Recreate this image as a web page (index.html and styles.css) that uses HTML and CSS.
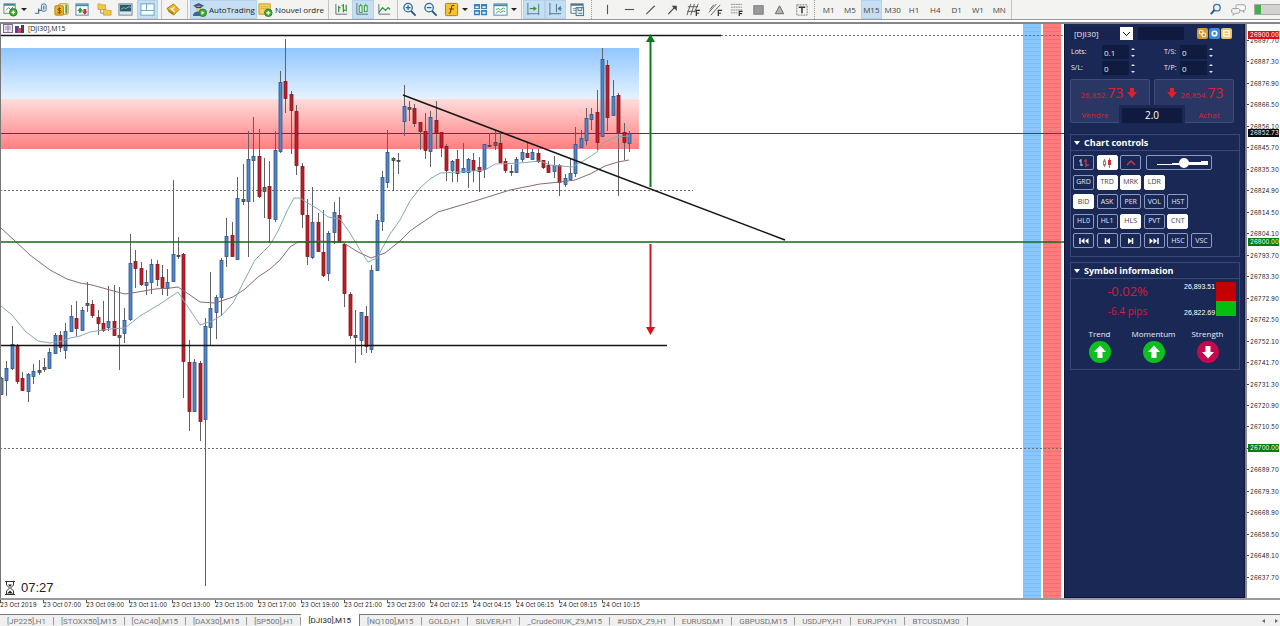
FILE: index.html
```html
<!DOCTYPE html>
<html lang="fr">
<head>
<meta charset="utf-8">
<title>[DJI30],M15</title>
<link rel="stylesheet" href="styles.css">
</head>
<body>
<header class="toolbar">
  <div class="group group-file">
    <button class="tool tool-menu" aria-label="New chart"><svg class="icon" viewBox="0 0 16 16"><rect x="1" y="2" width="12" height="10" fill="#fff" stroke="#5a8a6a"/><path d="M1 3h12" stroke="#4d80a0" stroke-width="2"/><path d="M3 9l3-3 2 2 3-3" fill="none" stroke="#3a9a3a"/><circle cx="11" cy="11" r="4" fill="#3fae2f" stroke="#287a20"/><path d="M11 9v4M9 11h4" stroke="#fff" stroke-width="1.4"/></svg><span class="caret"></span></button>
    <button class="tool" aria-label="Profiles"><svg class="icon" viewBox="0 0 16 16"><path d="M2 12h4v-3h5M6 12v-5" fill="none" stroke="#4a6f95" stroke-width="1.3"/><rect x="9" y="2" width="5" height="8" rx="2" fill="#dcecf8" stroke="#3f6d98"/><path d="M11.500 4v4" stroke="#2a5a88"/></svg></button>
    <button class="tool" aria-label="Market watch"><svg class="icon" viewBox="0 0 16 16"><rect x="5" y="2" width="10" height="11" rx="1" fill="#fff3c0" stroke="#b98a20"/><path d="M12 3h2v9h-2z" fill="#58a060"/><rect x="1" y="4" width="9" height="10" rx="1" fill="#f5b820" stroke="#b47a10"/><path d="M7.500 7H5a1 1 0 0 0 0 2h1.500a1 1 0 0 1 0 2.500H3.500M5.600 5.500v7.500" fill="none" stroke="#7a4a00"/></svg></button>
    <button class="tool" aria-label="Data window"><svg class="icon" viewBox="0 0 16 16"><rect x="1" y="2" width="13" height="12" fill="#fff" stroke="#4d86a8"/><path d="M1 3.500h13" stroke="#4d86a8" stroke-width="2"/><path d="M2.500 9.500l3-4 3 4H7v2H4v-2z" fill="#2c9a34"/><path d="M7.500 10l3 3.500 3-3.500H12V7.500H9V10z" fill="#cc3030"/></svg></button>
    <button class="tool" aria-label="Navigator"><svg class="icon" viewBox="0 0 16 16"><path d="M1 2h3l1 1h4v5H1z" fill="#f6c744" stroke="#c49320" stroke-width=".7"/><path d="M4 8v4h4" fill="none" stroke="#888"/><path d="M7 8h3l1 1h4v5H7z" fill="#f6c744" stroke="#c49320" stroke-width=".7"/></svg></button>
    <button class="tool" aria-label="Terminal"><svg class="icon" viewBox="0 0 16 16"><rect x="1" y="2" width="14" height="12" fill="#dce8ee" stroke="#6f8794"/><rect x="2" y="3" width="12" height="7" fill="#2c5876"/><path d="M3 8l3-2 2 1 4-2 2 1" fill="none" stroke="#7ccf6a"/></svg></button>
    <button class="tool is-on" aria-label="Tester"><svg class="icon" viewBox="0 0 16 16"><rect x="1" y="2" width="14" height="12" fill="#fff" stroke="#5fa0cc"/><path d="M1 9h14M7 2v7" stroke="#5fa0cc"/></svg></button>
  </div>
  <div class="group group-coin">
    <button class="tool" aria-label="MetaEditor"><svg class="icon" viewBox="0 0 16 16"><path d="M1 7l7-5 6 6-6 6z" fill="#efb52a" stroke="#a8761a"/><path d="M1 7l2 4 5 3v-3z" fill="#b88020"/><path d="M5 6.500l4 4M9 5l-3 4" stroke="#fff" stroke-width="1.200"/></svg></button>
  </div>
  <div class="group group-trade">
    <button class="tool tool-text is-on"><svg class="icon" viewBox="0 0 16 16"><path d="M1 4l6-3 6 3-6 3z" fill="#3b5c86"/><circle cx="7" cy="7" r="3" fill="#e6c39a"/><path d="M4 5h6v1.500H4z" fill="#2c486e"/><path d="M1 15c0-4 3-5 6-5s5 2 5 5z" fill="#3d6796"/><circle cx="11.500" cy="11.500" r="4" fill="#42b036" stroke="#2b7c22"/><path d="M10.200 9.500v4l3-2z" fill="#fff"/></svg>AutoTrading</button>
    <button class="tool tool-text"><svg class="icon" viewBox="0 0 16 16"><path d="M1 2h12v8l-3 3H1z" fill="#f5d35c" stroke="#c29a2a"/><path d="M3 5h8M3 7h8" stroke="#d8b13c"/><circle cx="11" cy="11.500" r="4" fill="#42b036" stroke="#2b7c22"/><path d="M11 9.500v4M9 11.500h4" stroke="#fff" stroke-width="1.400"/></svg>Nouvel ordre</button>
  </div>
  <div class="group group-type">
    <button class="tool" aria-label="Bar chart"><svg class="icon" viewBox="0 0 16 16"><path d="M2 2v11h12" fill="none" stroke="#60707c"/><path d="M5 4v7M5 6h2M10 2v9M8 4h2M10 9h2M13 3v7" fill="none" stroke="#2f9638" stroke-width="1.300"/></svg></button>
    <button class="tool is-on" aria-label="Candles"><svg class="icon" viewBox="0 0 16 16"><path d="M2 1v12h12" fill="none" stroke="#60707c"/><rect x="4.500" y="4" width="3" height="7" fill="#e9f7e9" stroke="#2f9638"/><rect x="10" y="4" width="3" height="6" fill="#e9f7e9" stroke="#2f9638"/><path d="M6 2v2M11.500 2v2" stroke="#2f9638"/></svg></button>
    <button class="tool" aria-label="Line chart"><svg class="icon" viewBox="0 0 16 16"><path d="M2 2v11h12" fill="none" stroke="#60707c"/><path d="M2 11l4-5 3 3 3-3 2 2" fill="none" stroke="#2f9638" stroke-width="1.300"/></svg></button>
  </div>
  <div class="group group-zoom">
    <button class="tool" aria-label="Zoom in"><svg class="icon" viewBox="0 0 16 16"><circle cx="6.500" cy="6" r="4.500" fill="#e4f2fb" stroke="#2e6b9e" stroke-width="1.400"/><path d="M9.500 9.500l5 5" stroke="#28557c" stroke-width="2"/><path d="M6.500 3.500v5M4 6h5" stroke="#25659c" stroke-width="1.300"/></svg></button>
    <button class="tool" aria-label="Zoom out"><svg class="icon" viewBox="0 0 16 16"><circle cx="6.500" cy="6" r="4.500" fill="#e4f2fb" stroke="#2e6b9e" stroke-width="1.400"/><path d="M9.500 9.500l5 5" stroke="#28557c" stroke-width="2"/><path d="M4 6h5" stroke="#25659c" stroke-width="1.300"/></svg></button>
    <button class="tool tool-menu" aria-label="Indicators"><svg class="icon" viewBox="0 0 16 16"><rect x="1.500" y="1.500" width="13" height="13" rx="1" fill="#f7c22b" stroke="#a97c14"/><path d="M11 4c-2-1-3 0-3 2l-1 4c0 2-1 2-2 2M5.500 7.500h5" fill="none" stroke="#6a4300" stroke-width="1.200"/></svg><span class="caret"></span></button>
    <button class="tool" aria-label="Tile windows"><svg class="icon" viewBox="0 0 16 16"><path d="M1 2h6.500v5.500H1zM8.500 2H15v5.500H8.500zM1 8.500h6.500V14H1zM8.500 8.500H15V14H8.500z" fill="#3a83b4"/><path d="M2.500 5.500h3.500M10 5.500h3.500M2.500 11.500h3.500M10 11.500h3.500" stroke="#dff0fa" stroke-width="2"/></svg></button>
    <button class="tool tool-menu" aria-label="Templates"><svg class="icon" viewBox="0 0 16 16"><rect x="1" y="2" width="14" height="12" fill="#fff" stroke="#4b86a5"/><path d="M1 3.500h14" stroke="#4b86a5" stroke-width="2"/><path d="M3 8l3-1 2 1.500 3-2 2 1M3 12l3-2 2 1 3-1.500 2 1" fill="none" stroke="#45a050"/></svg><span class="caret"></span></button>
  </div>
  <div class="group group-shift">
    <button class="tool is-on" aria-label="Auto scroll"><svg class="icon" viewBox="0 0 16 16"><path d="M2 1v13M2 12.500h12M13.500 2v12" stroke="#56748a" fill="none"/><path d="M4 7h5" stroke="#2f9638" stroke-width="1.300"/><path d="M8 4.500l3.500 2.500L8 9.500z" fill="#2f9638"/></svg></button>
    <button class="tool is-on" aria-label="Chart shift"><svg class="icon" viewBox="0 0 16 16"><path d="M2 1v13M2 12.500h12M9 2v9" stroke="#4a708e" fill="none"/><path d="M10.500 7l3-2.500v5zM13 7h2" fill="#3c7db0" stroke="#3c7db0" stroke-width=".6"/></svg></button>
    <button class="tool" aria-label="Windows"><svg class="icon" viewBox="0 0 16 16"><rect x="1" y="2" width="13" height="10" fill="#fff" stroke="#4b7590"/><path d="M1 3h13" stroke="#4b7590" stroke-width="2"/><path d="M3 7h4M3 9h4" stroke="#7a98a8"/><rect x="6.500" y="6" width="8" height="8.500" fill="#e2edf2" stroke="#4b6c80"/><path d="M8.500 6v3h4V6M9 12h4" fill="none" stroke="#4b6c80"/></svg></button>
  </div>
  <div class="group group-draw">
    <button class="tool" aria-label="Vertical line"><svg class="icon" viewBox="0 0 16 16"><path d="M8 3v10" stroke="#555" stroke-width="1.200"/></svg></button>
    <button class="tool" aria-label="Horizontal line"><svg class="icon" viewBox="0 0 16 16"><path d="M3 8h10" stroke="#555" stroke-width="1.200"/></svg></button>
    <button class="tool" aria-label="Trend line"><svg class="icon" viewBox="0 0 16 16"><path d="M3.500 13L12.500 4" stroke="#555" stroke-width="1.200"/></svg></button>
    <button class="tool" aria-label="Arrow line"><svg class="icon" viewBox="0 0 16 16"><path d="M3.500 13L11 5" stroke="#444" stroke-width="1.300"/><path d="M7 4h5.500v5.500z" fill="#444"/></svg></button>
    <button class="tool" aria-label="Gann fan"><svg class="icon" viewBox="0 0 16 16"><path d="M1 14L5 2M5 14L9 2M9 11l4-9M2 5h11M1 10h9" stroke="#5c5c5c" fill="none"/><path d="M11 15v-6h4M11 12h3" stroke="#333" stroke-width="1.300" fill="none"/></svg></button>
    <button class="tool" aria-label="Channel"><svg class="icon" viewBox="0 0 16 16"><path d="M1 11L9 2M3 14L13 3M2 8l4-5" stroke="#5c5c5c" fill="none"/><path d="M11 15V9h4M11 12h3" stroke="#333" stroke-width="1.300" fill="none"/></svg></button>
    <button class="tool" aria-label="Fibonacci"><svg class="icon" viewBox="0 0 16 16"><path d="M2 2.500h12M2 5.500h12M2 8.500h12M2 11.500h7" stroke="#8a8a8a" stroke-dasharray="2 .6"/><path d="M11 15v-5h3.500M11 12.500h3" stroke="#333" stroke-width="1.300" fill="none"/></svg></button>
    <button class="tool" aria-label="Rectangle"><svg class="icon" viewBox="0 0 16 16"><rect x="3" y="4" width="10" height="9" fill="#9a9a9a" stroke="#777"/></svg></button>
    <button class="tool" aria-label="Triangle"><svg class="icon" viewBox="0 0 16 16"><path d="M8 4l4.500 8.500h-9z" fill="#b4b4b4" stroke="#666"/></svg></button>
    <button class="tool" aria-label="Text label"><svg class="icon" viewBox="0 0 16 16"><rect x="3" y="3" width="11" height="11" fill="none" stroke="#777" stroke-dasharray="2 1"/><path d="M5 5.500h7M8.500 5.500V12" stroke="#333" stroke-width="1.600"/></svg></button>
  </div>
  <div class="group group-time">
    <button class="tool">M1</button><button class="tool">M5</button><button class="tool is-on">M15</button><button class="tool">M30</button><button class="tool">H1</button><button class="tool">H4</button><button class="tool">D1</button><button class="tool">W1</button><button class="tool">MN</button>
  </div>
  <div class="group group-status">
    <button class="tool" aria-label="Search"><svg class="icon" viewBox="0 0 16 16"><circle cx="9.500" cy="6" r="3.500" fill="#e7f3fb" stroke="#3b71a0" stroke-width="1.400"/><path d="M7 8.500L3 13" stroke="#28557c" stroke-width="2"/></svg></button>
    <button class="tool" aria-label="Chat"><svg class="icon" viewBox="0 0 16 16"><path d="M6 3h8c2 0 2 6 0 6h-1l1 2-3-2H7C5 9 5 3 6 3z" fill="#fafafa" stroke="#999"/><path d="M2 7h6c2 0 2 5 0 5H5l-3 2 .5-2C0 12 0 7 2 7z" fill="#f2f2f2" stroke="#999"/></svg></button>
    <span class="meter"></span>
  </div>
</header>

<main class="workspace">
  <section class="chart">
    <svg class="plot" viewBox="0 24 1064 574" preserveAspectRatio="none">
      <defs>
        <linearGradient id="zone-top" x1="0" y1="0" x2="0" y2="1"><stop offset="0" stop-color="#90c6ff"/><stop offset="1" stop-color="#e6f3ff"/></linearGradient>
        <linearGradient id="zone-low" x1="0" y1="0" x2="0" y2="1"><stop offset="0" stop-color="#ffdcdc"/><stop offset="1" stop-color="#ff7f7f"/></linearGradient>
        <pattern id="band-blue" width="18" height="4" patternUnits="userSpaceOnUse"><path d="M0 0h18v4H0z" fill="#8ac6ff"/><path d="M0 3h18v1H0z" fill="#7dbaf5"/></pattern>
        <pattern id="band-red" width="18" height="4" patternUnits="userSpaceOnUse"><path d="M0 0h20v4H0z" fill="#ff7c7c"/><path d="M0 3h20v1H0z" fill="#f26e70"/></pattern>
      </defs>
      <path d="M0 48h639v51H0z" fill="url(#zone-top)"/>
      <path d="M0 99h639v50H0z" fill="url(#zone-low)"/>
      <path d="M1023 24h18v574h-18z" fill="url(#band-blue)"/>
      <path d="M1043 24h18v574h-18z" fill="url(#band-red)"/>
      <path d="M0 190.500h693M721 35.500h343M0 448.500h1064" class="level-dash"/>
      <path d="M0 133.500h1064" class="level-price"/>
      <g id="candles"></g>
      <path class="ma ma-slow" d="M1 228L14 240 30 255 50 270 67 279 80 283 92 285 110 290 125 294 138 292 155 289 170 288 178 287 190 295 200 302 215 303 233 297 245 289 258 277 270 269 280 260 290 247 298 242 320 241 342 242 358 252 371 258 385 253 400 241 410 231 420 224 438 212 475 201 510 190 540 184 560 182 575 180 590 174 605 166 618 162 629 160"/>
      <path class="ma ma-fast" d="M1 306L12 315 25 331 38 341 50 343 62 341 70 338 80 336 90 332 110 329 125 328 140 316 160 304 172 296 178 292 188 307 200 325 212 321 222 315 233 303 243 283 255 260 270 245 278 231 288 209 294 198 300 198 306 202 318 209 328 217 340 219 350 233 360 250 368 262 377 258 390 234 400 220 410 201 420 188 430 179 440 173 460 172 485 170 495 164 520 163 540 161 550 165 572 167 585 160 597 152 603 143 615 137 629 136"/>
      <path d="M0 242h1064" class="level-green"/>
      <path d="M0 35.500h721M0 345.500h667M403 95L785 240" class="level-black"/>
      <path d="M650.500 187V40" stroke="#0c7a1c" stroke-width="2"/><path d="M650.500 34l4.500 8h-9z" fill="#0c7a1c"/>
      <path d="M650.500 244v84" stroke="#d01422" stroke-width="2"/><path d="M650.500 335l4.500-8h-9z" fill="#e00c18"/>
      <path d="M.5 24v574" stroke="#777" stroke-width="1"/>
    </svg>
    <div class="chart-title">
      <svg class="title-icons" viewBox="0 0 22 10"><rect x=".5" y=".5" width="9" height="8" fill="#eee6f2" stroke="#806a96"/><path d="M2 3h6M2 5h6M5 1v7" stroke="#a08ab0"/><rect x="12" y="2" width="4" height="7" fill="#4a4a94"/><rect x="15" y="4" width="4" height="5" fill="#d04a50"/><rect x="18" y="1" width="3" height="8" fill="#3c3c80"/></svg>
      <span>[DJI30],M15</span>
    </div>
    <div class="countdown">
      <svg class="hourglass" viewBox="0 0 10 16"><path d="M0 1.500h10M0 14.500h10M1.500 2v3l3 3-3 3v3M8.500 2v3l-3 3 3 3v3" fill="none" stroke="#333"/><path d="M3 4.500h4L5 7zM2 13.500l3-3 3 3z" fill="#222"/></svg>
      <span>07:27</span>
    </div>
  </section>

  <aside class="panel">
    <div class="panel-top">
      <select class="symbol" aria-label="Symbol"><option>[DJI30]</option></select>
      <input class="note" type="text" aria-label="Note">
      <div class="panel-icons">
        <button class="chip chip-gold" aria-label="Link"><svg viewBox="0 0 12 12"><rect x="2.500" y="2.500" width="4" height="4" rx="1" fill="none" stroke="#fff"/><rect x="5.500" y="5.500" width="4" height="4" rx="1" fill="none" stroke="#fff"/></svg></button>
        <button class="chip chip-blue" aria-label="Settings"><svg viewBox="0 0 12 12"><circle cx="6" cy="6" r="2.500" fill="none" stroke="#fff" stroke-width="1.800"/></svg></button>
        <button class="chip chip-sand" aria-label="Minimise"><svg viewBox="0 0 12 12"><rect x="3" y="3" width="6" height="6" fill="none" stroke="#fff" stroke-width="1.400"/><path d="M3 6h6" stroke="#fff"/></svg></button>
      </div>
    </div>

    <div class="fields">
      <label for="lots">Lots:</label><input id="lots" type="text" value="0.1"><span class="spin"><i class="up"></i><i class="down"></i></span>
      <label for="ts">T/S:</label><input id="ts" type="text" value="0"><span class="spin"><i class="up"></i><i class="down"></i></span>
      <label for="sl">S/L:</label><input id="sl" type="text" value="0"><span class="spin"><i class="up"></i><i class="down"></i></span>
      <label for="tp">T/P:</label><input id="tp" type="text" value="0"><span class="spin"><i class="up"></i><i class="down"></i></span>
    </div>

    <div class="deal">
      <button class="deal-side"><span class="quote">26,852.<b>73</b><svg viewBox="0 0 10 10"><path d="M3 0h4v4h3L5 10 0 4h3z" fill="#e0202c"/></svg></span><span class="deal-name">Vendre</span></button>
      <button class="deal-side deal-buy"><span class="quote"><svg viewBox="0 0 10 10"><path d="M3 0h4v4h3L5 10 0 4h3z" fill="#e0202c"/></svg>26,854.<b>73</b></span><span class="deal-name">Achat</span></button>
      <output class="spread">2.0</output>
    </div>

    <section class="card">
      <h2 class="card-title">Chart controls</h2>
      <div class="keys">
        <button class="key" aria-label="Bars"><svg viewBox="0 0 12 10"><path d="M3 1v7M1 3h2M3 7h2" stroke="#c8d0ea" fill="none"/><path d="M8 1v8M6 3h2M8 7h3" stroke="#e0405a" fill="none"/></svg></button>
        <button class="key is-lit" aria-label="Candles"><svg viewBox="0 0 12 10"><path d="M3.500 1v8M8.500 0v10" stroke="#c06a6a"/><rect x="2.500" y="3" width="2" height="4" fill="#fff" stroke="#888"/><rect x="7" y="2" width="3" height="5" fill="#d0303c"/></svg></button>
        <button class="key" aria-label="Line"><svg viewBox="0 0 12 10"><path d="M2 7l4-4 4 4" stroke="#d83a50" stroke-width="1.300" fill="none"/></svg></button>
        <input class="zoom" type="range" min="0" max="100" value="60" aria-label="Zoom">
        <button class="key row-start">GRD</button><button class="key is-lit">TRD</button><button class="key is-lit">MRK</button><button class="key is-lit">LDR</button>
        <button class="key row-start is-lit">BID</button><button class="key">ASK</button><button class="key">PER</button><button class="key">VOL</button><button class="key">HST</button>
        <button class="key row-start">HL0</button><button class="key">HL1</button><button class="key is-lit">HLS</button><button class="key">PVT</button><button class="key is-lit">CNT</button>
        <button class="key row-start" aria-label="First"><svg viewBox="0 0 12 10"><path d="M2 2v6" stroke="#fff" stroke-width="1.500"/><path d="M6.500 2v6L3 5zM10.500 2v6L7 5z" fill="#fff"/></svg></button>
        <button class="key" aria-label="Previous"><svg viewBox="0 0 12 10"><path d="M4.500 2v6" stroke="#fff" stroke-width="1.500"/><path d="M9 2v6L5 5z" fill="#fff"/></svg></button>
        <button class="key" aria-label="Next"><svg viewBox="0 0 12 10"><path d="M7.500 2v6" stroke="#fff" stroke-width="1.500"/><path d="M3 2v6l4-3z" fill="#fff"/></svg></button>
        <button class="key" aria-label="Last"><svg viewBox="0 0 12 10"><path d="M10 2v6" stroke="#fff" stroke-width="1.500"/><path d="M5.500 2v6L9 5zM1.500 2v6L5 5z" fill="#fff"/></svg></button>
        <button class="key">HSC</button><button class="key">VSC</button>
      </div>
    </section>

    <section class="card">
      <h2 class="card-title">Symbol information</h2>
      <div class="info">
        <div class="change"><strong>-0.02%</strong><span>-6.4 pips</span></div>
        <div class="range"><span>26,893.51</span><span>26,822.69</span></div>
        <div class="range-bar"><i class="range-high"></i><i class="range-low"></i></div>
      </div>
      <div class="signals">
        <div class="signal">Trend<svg viewBox="0 0 22 22"><circle cx="11" cy="11" r="11" fill="#0fbf1f"/><path d="M11 4.500l6 6.500h-3.500v6h-5v-6H5z" fill="#fff"/></svg></div>
        <div class="signal">Momentum<svg viewBox="0 0 22 22"><circle cx="11" cy="11" r="11" fill="#0fbf1f"/><path d="M11 4.500l6 6.500h-3.500v6h-5v-6H5z" fill="#fff"/></svg></div>
        <div class="signal">Strength<svg viewBox="0 0 22 22"><circle cx="11" cy="11" r="11" fill="#c4094f"/><path d="M11 17.500l6-6.500h-3.500V5h-5v6H5z" fill="#fff"/></svg></div>
      </div>
    </section>
  </aside>

  <div class="prices" id="prices"></div>
</main>

<div class="times">
  <span>23 Oct 2019</span><span>23 Oct 07:00</span><span>23 Oct 09:00</span><span>23 Oct 11:00</span><span>23 Oct 13:00</span><span>23 Oct 15:00</span><span>23 Oct 17:00</span><span>23 Oct 19:00</span><span>23 Oct 21:00</span><span>23 Oct 23:00</span><span>24 Oct 02:15</span><span>24 Oct 04:15</span><span>24 Oct 06:15</span><span>24 Oct 08:15</span><span>24 Oct 10:15</span>
</div>

<nav class="tabs">
  <a href="#">[JP225],H1</a><a href="#">[STOXX50],M15</a><a href="#">[CAC40],M15</a><a href="#">[DAX30],M15</a><a href="#">[SP500],H1</a><a href="#" class="is-current">[DJI30],M15</a><a href="#">[NQ100],M15</a><a href="#">GOLD,H1</a><a href="#">SILVER,H1</a><a href="#">_CrudeOilUK_Z9,M15</a><a href="#">#USDX_Z9,H1</a><a href="#">EURUSD,M1</a><a href="#">GBPUSD,M15</a><a href="#">USDJPY,H1</a><a href="#">EURJPY,H1</a><a href="#">BTCUSD,M30</a>
  <span class="tab-scroll"><button class="arrow arrow-left" aria-label="Scroll left"></button><button class="arrow arrow-right" aria-label="Scroll right"></button></span>
</nav>
<script src="chart.js"></script>
</body>
</html>
```
FILE: styles.css
```css
* { box-sizing: border-box; }
body {
  margin: 0;
  min-height: 100vh;
  display: flex;
  flex-direction: column;
  background: #fff;
  color: #222;
  font: 8px/10px "Open Sans", "Noto Sans", sans-serif;
}
button, input, select { font: inherit; color: inherit; margin: 0; padding: 0; border: 0; background: none; border-radius: 0; }
svg { display: block; }

/* Toolbar */
.toolbar { display: flex; height: 20px; background: #f3f3f2; border-bottom: 1px solid #9a9a9a; }
.group { display: flex; align-items: stretch; flex: none; }
.tool { flex: 1 1 21px; display: flex; align-items: center; justify-content: center; border: 1px solid transparent; color: #444; }
.tool-menu { flex-basis: 28px; gap: 3px; }
.tool-text { gap: 2px; font-size: 8px; color: #222; white-space: nowrap; }
.tool.is-on { background: #c6def2; border-color: #b4d2ec; }
.icon { width: 15px; height: 15px; flex: none; }
.caret { border: 3px solid transparent; border-top-color: #222; border-bottom: 0; }
.group-file { width: 162px; padding: 0 3px 0 1px; border-right: 1px solid #c4c4c4; }
.group-coin { width: 26px; padding: 0 3px 0 1px; border-right: 1px solid #c4c4c4; }
.group-trade { width: 141px; padding: 0 3px 0 2px; border-right: 1px solid #c4c4c4; }
.group-trade .tool { flex: 1 1 0; }
.group-type { width: 69px; padding: 0 2px; border-right: 1px solid #c4c4c4; }
.group-zoom { width: 124px; padding: 0 2px 0 1px; border-right: 1px solid #c4c4c4; }
.group-shift { width: 70px; padding: 0 3px 0 1px; border-right: 1px dotted #999; }
.group-draw { width: 223px; padding: 0 2px 0 5px; border-right: 1px dotted #999; }
.group-time { width: 197px; padding: 0 1px 0 3px; border-right: 1px solid #c4c4c4; }
.group-status { margin-left: auto; gap: 1px; align-items: center; }
.meter { width: 26px; height: 11px; margin-left: 3px; background: linear-gradient(90deg, #45b04a 6px, #d2d2d2 6px); border: 1px solid #aaa; border-right: 0; }
.group-status .tool { padding: 0 2px; margin-right: 1px; }

/* Workspace */
.workspace { flex: 1; display: flex; margin-top: 2px; border-top: 2px solid #84848a; border-bottom: 2px solid #9a9a9e; }
.chart { flex: 1; position: relative; min-width: 0; }
.plot { position: absolute; inset: 0; width: 100%; height: 100%; }
.level-dash { stroke: #6e6e6e; stroke-dasharray: 2 2; fill: none; }
.level-price { stroke: #444; fill: none; }
.level-green { stroke: #0e6b16; stroke-width: 1.5; fill: none; }
.level-black { stroke: #161616; stroke-width: 1.5; fill: none; }
.ma { fill: none; stroke-width: 1; stroke-linejoin: round; }
.ma-slow { stroke: #8a6a74; }
.ma-fast { stroke: #86a8b4; }
.chart-title { position: absolute; left: 3px; top: 0; display: flex; align-items: center; gap: 3px; font-size: 7px; }
.title-icons { width: 22px; height: 10px; }
.countdown { position: absolute; left: 5px; bottom: 2px; display: flex; align-items: center; gap: 6px; font: 13px/16px "Liberation Sans", sans-serif; }
.hourglass { width: 10px; height: 16px; }

/* Trading panel */
.panel { width: 181px; padding: 3px 4px 3px 5px; background: #1a2855; border: 1px solid #0c1538; border-top-width: 0; color: #e8ecf8; }
.panel-top { display: flex; align-items: center; height: 13px; padding-left: 1px; }
.symbol {
  width: 62px; height: 13px; padding-left: 3px; appearance: none; font-size: 8px;
  background:
    linear-gradient(45deg, transparent 3px, #222 3px 4px, transparent 4px) right 6px top 4px / 4px 6px no-repeat,
    linear-gradient(-45deg, transparent 3px, #222 3px 4px, transparent 4px) right 3px top 4px / 4px 6px no-repeat,
    linear-gradient(#fff, #fff) right / 13px 13px no-repeat,
    #18244f;
}
.note { width: 46px; height: 13px; margin-left: 5px; background: #0f1a3e; }
.panel-icons { display: flex; gap: 1px; margin-left: auto; margin-right: 8px; }
.chip { width: 11px; height: 11px; border-radius: 2px; }
.chip svg { width: 11px; height: 11px; }
.chip-gold { background: #d09a36; }
.chip-blue { background: #3a8ad6; }
.chip-sand { background: #ecc566; }
.fields { display: grid; grid-template-columns: 31px 27px 35px 16px 27px 10px; row-gap: 2px; align-items: center; margin-top: 5px; padding-left: 1px; }
.fields input { width: 27px; height: 14px; padding-left: 2px; background: #101b40; }
.fields label { font-size: 7px; }
.spin { display: grid; gap: 5px; padding-left: 2px; }
.up, .down { width: 0; border: 2px solid transparent; }
.up { border-bottom-color: #dfe5f6; border-top: 0; }
.down { border-top-color: #dfe5f6; border-bottom: 0; }
.deal { position: relative; display: grid; grid-template-columns: 80px 80px; gap: 4px; margin-top: 4px; }
.deal-side { height: 44px; padding: 3px 0 0; background: #2a3765; border: 1px solid #3f4c7c; border-radius: 2px; color: #dc2230; display: flex; flex-direction: column; justify-content: space-between; align-items: flex-start; }
.quote { display: flex; align-items: baseline; justify-content: center; width: 100%; font-size: 8px; line-height: 20px; }
.quote b { font-weight: 400; font-size: 14px; }
.quote svg { width: 10px; height: 10px; margin: 0 3px; }
.deal-name { width: 48px; text-align: center; font-size: 8px; line-height: 14px; }
.deal-buy { align-items: flex-end; }
.spread { position: absolute; left: 52px; width: 60px; bottom: 0; height: 15px; background: #0f1a3e; box-shadow: 0 0 0 3px #1a2855; color: #fff; font-size: 10px; line-height: 15px; text-align: center; }
.card { margin: 11px 0 0; border: 1px solid #3a4778; }
.card + .card { margin-top: 5px; }
.card-title { display: flex; align-items: center; gap: 4px; height: 16px; margin: 0; padding-left: 3px; border-bottom: 1px solid #3a4778; font-size: 9px; line-height: 15px; color: #fff; }
.card-title::before { content: ""; border: 3px solid transparent; border-top: 4px solid #fff; border-bottom: 0; }
.keys { display: grid; grid-template-columns: repeat(6, 21px); width: 139px; height: 93px; justify-content: space-between; align-content: space-between; margin: 4px 0 8px 2px; }
.key { height: 15px; display: flex; align-items: center; justify-content: center; border: 1px solid #8e9ac4; border-radius: 2px; font-size: 7px; color: #e2e7f6; }
.key svg { width: 12px; height: 10px; }
.key.is-lit { background: #fff; border-color: #fff; color: #444; }
.row-start { grid-column-start: 1; }
.zoom { grid-column: 4 / 7; justify-self: end; width: 66px; height: 15px; padding: 0 2px; appearance: none; border: 1px solid #8e9ac4; border-radius: 2px; background: linear-gradient(to bottom right, transparent 50%, #fff 50%) center / 58px 4px no-repeat; }
.zoom::-webkit-slider-thumb { appearance: none; width: 10px; height: 10px; border-radius: 50%; background: #fff; }
.info { display: grid; grid-template-columns: 1fr 32px 20px; padding: 3px 3px 0 0; height: 38px; }
.change { display: flex; flex-direction: column; align-items: center; gap: 4px; color: #d01f38; font-size: 10px; line-height: 14px; }
.change strong { font-size: 13px; line-height: 18px; font-weight: 400; }
.range { display: flex; flex-direction: column; justify-content: space-between; font: 7px/10px "Liberation Sans", sans-serif; color: #fff; }
.range-bar { display: grid; grid-template-rows: 19px 15px; }
.range-high { background: #c40000; }
.range-low { background: #06be10; }
.signals { display: grid; grid-template-columns: repeat(3, 54px); justify-content: center; margin-top: 12px; padding: 0 3px 6px 0; }
.signal { display: flex; flex-direction: column; align-items: center; gap: 2px; font-size: 8px; }
.signal svg { width: 22px; height: 22px; }

/* Price scale */
.prices { position: relative; width: 35px; display: flex; flex-direction: column; justify-content: space-between; padding: 13px 0 16px; border-left: 2px solid #8c8a94; font: 6px/8px Inter, sans-serif; font-variant-numeric: tabular-nums; color: #222; }
.price::before { content: ""; display: inline-block; width: 2px; height: 1px; margin-right: 1px; vertical-align: 2px; background: #444; }
.mark { position: absolute; left: 1px; width: 31px; height: 8px; margin-top: -4px; padding-left: 2px; color: #fff; }
.mark-red { background: #d8101c; }
.mark-black { background: #0a0a0a; }
.mark-green { background: #0a7a12; }

/* Time scale */
.times { display: flex; height: 14px; font: 6px/10px Inter, sans-serif; font-variant-numeric: tabular-nums; color: #222; }
.times span { width: 43px; white-space: nowrap; background: linear-gradient(#555, #555) left top / 1px 3px no-repeat; }

/* Chart tabs */
.tabs { display: flex; height: 12px; background: #f0f0f0; border-top: 1px solid #777; font-family: Roboto, sans-serif; }
.tabs a { padding: 0 8px 0 7px; line-height: 13px; color: #777; text-decoration: none; white-space: nowrap; background: linear-gradient(#999, #999) right center / 1px 8px no-repeat; }
.tabs .is-current { margin-top: -1px; background: #fff; color: #222; border-right: 1px solid #777; }
.tab-scroll { display: flex; align-items: center; gap: 10px; margin-left: auto; padding-right: 2px; }
.arrow { border: 2px solid transparent; }
.arrow-left { border-right: 3px solid #666; border-left: 0; }
.arrow-right { border-left: 3px solid #666; border-right: 0; }
```
FILE: chart.js
```js
// Each candle: kind (b = up, r = down, d = doji), high, body top, body bottom, low
const candles = `
b 377 378 394 395|b 361 368 380 396|b 326 344 368 370|r 344 345 381 384|r 372 378 390 391|b 373 374 391 402
b 364 371 376 384|d 360 370 372 375|d 358 367 369 372|b 348 352 368 368|b 333 335 353 354|r 331 335 347 352
b 323 331 350 359|b 305 316 331 332|r 301 318 328 336|b 307 310 330 330|d 282 303 305 312|r 300 304 315 318
r 310 317 323 335|r 301 323 330 332|b 286 321 327 331|r 285 321 335 336|d 287 335 337 370|b 308 320 333 343
b 234 263 319 321|r 250 261 268 288|r 262 268 284 286|b 270 282 285 295|b 259 264 282 294|r 260 264 279 286
r 265 277 287 295|b 269 282 288 296|b 180 254 281 282|d 237 255 256 259|r 253 254 361 398|r 340 362 411 431
b 359 362 411 412|r 361 363 421 441|b 318 326 419 586|b 272 308 327 345|b 295 297 312 339|b 258 260 297 316
b 218 236 256 267|r 222 235 256 256|b 177 198 259 259|d 164 199 201 205|b 131 159 201 257|b 117 156 160 202
r 129 156 196 198|d 158 187 191 218|r 161 186 218 243|b 131 150 219 222|b 71 82 151 153|r 39 81 98 113
r 91 94 110 154|r 105 111 165 175|r 163 166 214 228|r 199 215 256 265|b 187 222 257 259|r 213 222 251 252
r 210 252 275 277|b 231 233 273 281|b 202 212 232 244|r 197 215 242 242|r 243 244 293 307|r 292 294 335 339
d 310 335 337 363|b 312 312 340 355|r 306 316 346 353|b 265 270 349 353|b 214 220 270 271|b 171 177 221 231
b 130 152 182 188|d 157 158 160 191|d 153 160 161 174|b 85 106 121 136|d 101 107 109 121|r 104 108 123 127
r 122 122 131 150|r 113 131 150 159|b 111 117 151 167|r 101 120 133 149|r 132 132 147 157|r 144 146 170 181
b 160 161 170 182|r 150 159 173 182|b 143 168 172 173|b 158 159 172 188|r 153 160 170 182|r 157 167 171 192
b 144 144 169 178|d 133 145 146 147|d 130 142 145 150|r 132 143 162 163|r 158 161 170 173|d 165 171 172 176
b 157 159 172 173|b 149 152 159 162|r 142 153 157 158|b 149 152 159 159|r 149 153 161 163|r 160 160 167 169
r 161 165 172 173|b 156 165 171 178|r 164 165 182 196|b 174 178 184 187|b 158 173 179 180|b 127 144 173 177
b 130 138 147 147|b 108 118 140 145|b 108 114 119 130|r 90 112 142 150|b 48 59 136 137|r 60 65 117 131
b 80 96 115 116|r 93 95 132 196|r 123 132 142 160|b 131 133 143 152`.trim().split(/[|\n]/);

const fill = { b: "#5088c6", r: "#b8202a", d: "#666" };
const edge = { b: "#2f5486", r: "#86141e", d: "#444" };
const step = 5.367;

document.getElementById("candles").innerHTML = candles.map((row, i) => {
  const [kind, ...levels] = row.split(" ");
  const [high, top, bottom, low] = levels.map(Number);
  const x = Math.round(1 + i * step);
  return `<path d="M${x + .5} ${high}V${low}" stroke="#626266"/>` +
    `<rect x="${x - 1}" y="${top + .5}" width="3" height="${Math.max(bottom - top, 1)}" fill="${fill[kind]}" stroke="${edge[kind]}" stroke-width=".8"/>`;
}).join("");

const high = 26900, topY = 11.5, perPoint = 2.065, plotHeight = 574;
const labels = Array.from({ length: 26 }, (_, i) => `<span class="price">${(26897.7 - i * 10.4).toFixed(2)}</span>`);
const marks = [[26900, "red"], [26852.73, "black"], [26800, "green"], [26700, "green"]].map(([value, tone]) =>
  `<span class="mark mark-${tone}" style="top:${((topY + (high - value) * perPoint) / plotHeight * 100).toFixed(2)}%">${value.toFixed(2)}</span>`);
document.getElementById("prices").innerHTML = labels.concat(marks).join("");
```
